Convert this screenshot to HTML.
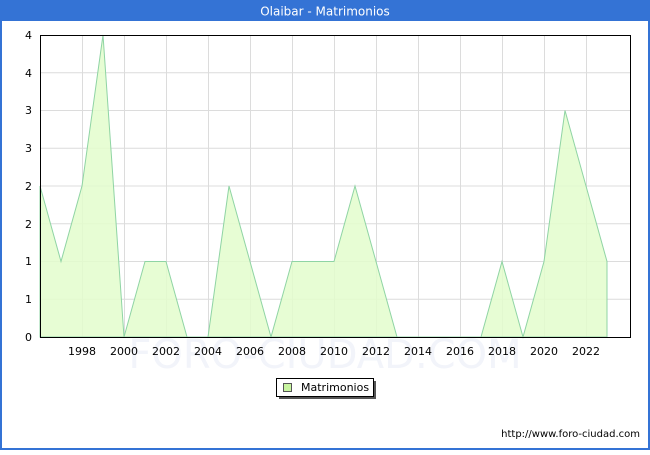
<!DOCTYPE html>
<html><head><style>
html,body{margin:0;padding:0;background:#fff;}
</style></head><body>
<svg width="650" height="450" xmlns="http://www.w3.org/2000/svg" font-family="'DejaVu Sans', 'Liberation Sans', sans-serif">
<rect x="0" y="0" width="650" height="450" fill="#fff"/>
<rect x="1" y="1" width="648" height="448" fill="none" stroke="#3473d5" stroke-width="2"/>
<rect x="0" y="0" width="650" height="21" fill="#3473d5"/>
<text x="325" y="15.5" text-anchor="middle" fill="#fff" font-size="12">Olaibar - Matrimonios</text>
<text x="325" y="368" text-anchor="middle" fill="#f2f4fa" font-size="40">FORO-CIUDAD.COM</text>
<g stroke="#dcdcdc" stroke-width="1">
<line x1="40" x2="630" y1="299.25" y2="299.25"/><line x1="40" x2="630" y1="261.5" y2="261.5"/>
<line x1="40" x2="630" y1="223.75" y2="223.75"/><line x1="40" x2="630" y1="186" y2="186"/>
<line x1="40" x2="630" y1="148.25" y2="148.25"/><line x1="40" x2="630" y1="110.5" y2="110.5"/>
<line x1="40" x2="630" y1="72.75" y2="72.75"/>
<line x1="82.5" x2="82.5" y1="35" y2="337"/><line x1="124.5" x2="124.5" y1="35" y2="337"/>
<line x1="166.5" x2="166.5" y1="35" y2="337"/><line x1="208.5" x2="208.5" y1="35" y2="337"/>
<line x1="250.5" x2="250.5" y1="35" y2="337"/><line x1="292.5" x2="292.5" y1="35" y2="337"/>
<line x1="334.5" x2="334.5" y1="35" y2="337"/><line x1="376.5" x2="376.5" y1="35" y2="337"/>
<line x1="418.5" x2="418.5" y1="35" y2="337"/><line x1="460.5" x2="460.5" y1="35" y2="337"/>
<line x1="502.5" x2="502.5" y1="35" y2="337"/><line x1="544.5" x2="544.5" y1="35" y2="337"/>
<line x1="586.5" x2="586.5" y1="35" y2="337"/>
</g>
<polygon fill="#e3fdcc" fill-opacity="0.85" stroke="#8fd4a4" stroke-width="1" points="40,337 40,186 61,261.5 82,186 103,35 124,337 145,261.5 166,261.5 187,337 208,337 229,186 250,261.5 271,337 292,261.5 313,261.5 334,261.5 355,186 376,261.5 397,337 481,337 502,261.5 523,337 544,261.5 565,110.5 586,186 607,261.5 607,337"/>
<rect x="40.5" y="35.5" width="590" height="302" fill="none" stroke="#000" stroke-width="1"/>
<g font-size="11" fill="#000" text-anchor="end">
<text x="32" y="341">0</text><text x="32" y="303">1</text><text x="32" y="265">1</text>
<text x="32" y="228">2</text><text x="32" y="190">2</text><text x="32" y="152">3</text>
<text x="32" y="114">3</text><text x="32" y="77">4</text><text x="32" y="39">4</text>
</g>
<g font-size="11" fill="#000" text-anchor="middle">
<text x="82" y="355">1998</text><text x="124" y="355">2000</text><text x="166" y="355">2002</text>
<text x="208" y="355">2004</text><text x="250" y="355">2006</text><text x="292" y="355">2008</text>
<text x="334" y="355">2010</text><text x="376" y="355">2012</text><text x="418" y="355">2014</text>
<text x="460" y="355">2016</text><text x="502" y="355">2018</text><text x="544" y="355">2020</text>
<text x="586" y="355">2022</text>
</g>
<rect x="279" y="381" width="97" height="18" fill="#555"/>
<rect x="276.5" y="378.5" width="97" height="18" fill="#fff" stroke="#000"/>
<rect x="283.5" y="383.5" width="8" height="8" fill="#c8f5a0" stroke="#555"/>
<text x="301" y="391" font-size="11">Matrimonios</text>
<text x="640" y="437" font-size="10" text-anchor="end">http://www.foro-ciudad.com</text>
</svg>
</body></html>
